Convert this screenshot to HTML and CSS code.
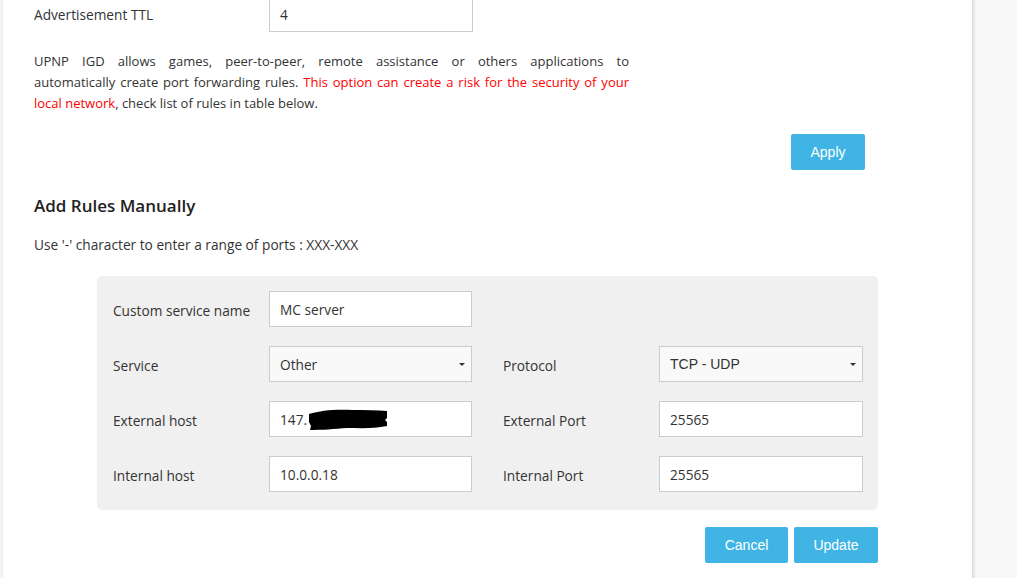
FILE: index.html
```html
<!DOCTYPE html>
<html lang="en">
<head>
  <meta charset="UTF-8" />
  <title>UPnP</title>
  <link rel="stylesheet" href="styles.css">
</head>
<body>
  <main class="panel">

    <!-- UPnP settings -->
    <div class="ttl-row">
      <label class="ttl-label">Advertisement TTL</label>
      <input class="field ttl-input" type="text" value="4" />
    </div>

    <p class="notice">
      <span class="line full">UPNP IGD allows games, peer-to-peer, remote assistance or others applications to</span>
      <span class="line full">automatically create port forwarding rules. <span class="warn">This option can create a risk for the security of your</span></span>
      <span class="line"><span class="warn">local network</span>, check list of rules in table below.</span>
    </p>

    <div class="apply-row">
      <button class="button apply">Apply</button>
    </div>

    <!-- Manual rules -->
    <h2>Add Rules Manually</h2>
    <p class="hint">Use '-' character to enter a range of ports : XXX-XXX</p>

    <div class="rule-box">
      <label>Custom service name</label>
      <input class="field" type="text" value="MC server" />
      <span></span><span></span><span></span>

      <label>Service</label>
      <div class="select-wrap">
        <select class="field select"><option>Other</option></select>
      </div>
      <span></span>
      <label>Protocol</label>
      <div class="select-wrap">
        <select class="field select arial"><option>TCP - UDP</option></select>
      </div>

      <label>External host</label>
      <div class="redacted">
        <input class="field" type="text" value="147." />
        <svg class="scribble" width="82" height="26" viewBox="0 0 82 26">
          <path d="M2 8 C14 4 30 3 46 4 C58 4 70 4 80 5 L80 12 L78 14 L80 16 L80 20 C66 23 52 22 40 22 C28 23 14 24 3 24 L4 20 L2 16 Z" fill="#000"/>
        </svg>
      </div>
      <span></span>
      <label>External Port</label>
      <input class="field" type="text" value="25565" />

      <label>Internal host</label>
      <input class="field" type="text" value="10.0.0.18" />
      <span></span>
      <label>Internal Port</label>
      <input class="field" type="text" value="25565" />
    </div>

    <div class="actions">
      <button class="button">Cancel</button>
      <button class="button">Update</button>
    </div>
  </main>
</body>
</html>
```

FILE: styles.css
```css
* {
  box-sizing: border-box;
}

body {
  margin: 0;
  background: #f8f8f8;
  font-family: "Open Sans", Arial, sans-serif;
  font-size: 13.7px;
  color: #333;
  height: 578px;
  overflow: hidden;
}

.panel {
  width: 969px;
  margin-left: 3px;
  height: 600px;
  background: #fff;
  padding: 0 31px;
  box-shadow: 1px 0 4px rgba(0,0,0,0.18);
}

.field {
  height: 36px;
  border: 1px solid #ccc;
  background: #fff;
  padding: 0 10px;
  font-family: "Open Sans", Arial, sans-serif;
  font-size: 13.7px;
  color: #333;
  width: 100%;
  outline: none;
  border-radius: 0;
}

.ttl-row {
  display: flex;
  align-items: center;
  margin-top: -4px;
  height: 36px;
}

.ttl-label {
  width: 235px;
}

.ttl-input {
  width: 204px;
}

.notice {
  width: 595px;
  margin: 19px 0 0;
  line-height: 21px;
  font-size: 13px;
}

.notice .line {
  display: block;
  white-space: nowrap;
}

.notice .line.full {
  white-space: normal;
  text-align: justify;
  text-align-last: justify;
}

.warn {
  color: #f00;
}

.apply-row {
  display: flex;
  justify-content: flex-end;
  margin-top: 20px;
  padding-right: 76px;
}

.button {
  background: #40b5e5;
  color: #fff;
  border: none;
  border-radius: 2px;
  height: 36px;
  font-family: "Liberation Sans", Arial, sans-serif;
  font-size: 14px;
  cursor: pointer;
}

.apply {
  width: 74px;
}

h2 {
  font-size: 17px;
  font-weight: 600;
  margin: 24px 0 0;
  line-height: 24px;
  color: #222;
}

.hint {
  margin: 18px 0 0;
  line-height: 18px;
}

.rule-box {
  margin: 22px 0 0 63px;
  width: 781px;
  background: #f0f0f0;
  border-radius: 5px;
  padding: 15px 15px 18px 16px;
  display: grid;
  grid-template-columns: 156px 203px 31px 156px 204px;
  row-gap: 19px;
  align-items: center;
}

.rule-box label {
  padding-top: 2px;
}

.select-wrap {
  position: relative;
}

.select-wrap::after {
  content: "";
  position: absolute;
  right: 7px;
  top: 17px;
  border-left: 3px solid transparent;
  border-right: 3px solid transparent;
  border-top: 3px solid #333;
  pointer-events: none;
}

.select {
  -webkit-appearance: none;
  appearance: none;
  background: #f9f9f9;
}

.arial {
  font-family: "Liberation Sans", Arial, sans-serif;
  font-size: 14px;
}

.redacted {
  position: relative;
}

.scribble {
  position: absolute;
  left: 38px;
  top: 5px;
}

.actions {
  display: flex;
  justify-content: flex-end;
  gap: 6px;
  width: 844px;
  margin-top: 17px;
}

.actions .button:first-child {
  width: 83px;
}

.actions .button:last-child {
  width: 84px;
}
```
